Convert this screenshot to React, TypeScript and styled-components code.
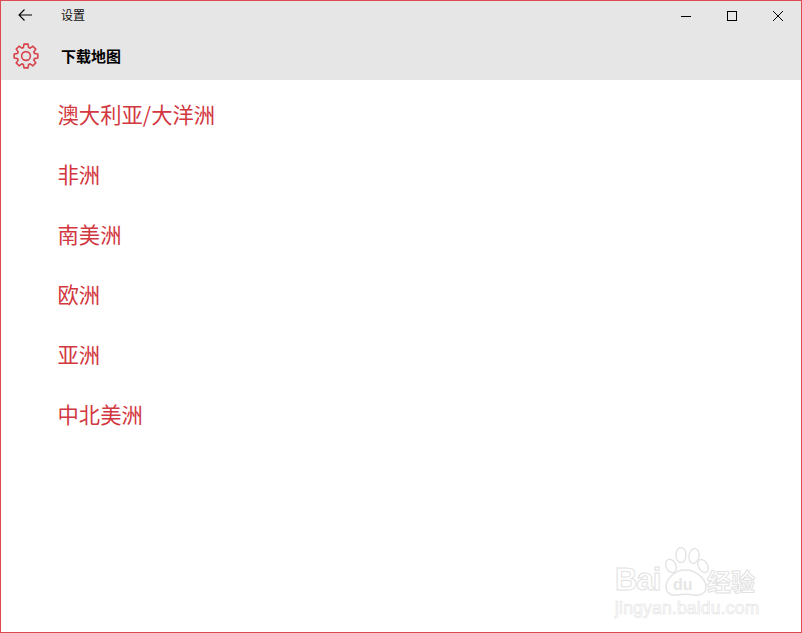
import React from "react";
import styled, { createGlobalStyle } from "styled-components";

const GlobalStyle = createGlobalStyle`
  html, body { margin: 0; padding: 0; background: #fff; }
  body { font-family: "Noto Sans CJK SC", "Liberation Sans", sans-serif; }
`;

const Windowed = styled.div`
  position: relative;
  box-sizing: border-box;
  width: 802px;
  height: 633px;
  border: 1px solid #dd4a52;
  background: #fff;
  overflow: hidden;
`;

const TitleBar = styled.div`
  display: flex;
  align-items: center;
  height: 30px;
  background: #e6e6e6;
`;

const BackButton = styled.div`
  display: flex;
  align-items: center;
  justify-content: center;
  box-sizing: border-box;
  width: 48px;
  height: 30px;
  padding-bottom: 2px;
`;

const TitleText = styled.span`
  margin: 0 0 3px 12px;
  font-size: 12px;
  color: #111;
  flex: 1;
`;

const WinButton = styled.div`
  display: flex;
  align-items: center;
  justify-content: center;
  width: 46px;
  height: 30px;
`;

const Header = styled.div`
  display: flex;
  align-items: center;
  height: 49px;
  background: #e6e6e6;
`;

const GearSlot = styled.div`
  display: flex;
  align-items: center;
  justify-content: center;
  box-sizing: border-box;
  width: 48px;
  padding-left: 1px;
  color: #d8434c;
`;

const PageTitle = styled.span`
  margin-left: 12px;
  font-size: 15px;
  font-weight: 700;
  color: #000;
`;

const RegionList = styled.ul`
  list-style: none;
  margin: 0;
  padding: 3px 0 0 56.5px;
`;

const RegionRow = styled.li`
  display: flex;
  align-items: center;
  height: 60px;
  font-size: 21.33px;
  color: #d2383f;
`;

const Watermark = styled.div`
  position: absolute;
  right: 40px;
  bottom: 10px;
  width: 146px;
  height: 76px;
`;

const Paw = styled.svg`
  position: absolute;
  left: 48px;
  top: 0;
`;

const MarkBai = styled.span`
  position: absolute;
  left: 0;
  top: 16px;
  font-family: "Liberation Sans", sans-serif;
  font-size: 31px;
  font-weight: 700;
  line-height: 36px;
  letter-spacing: -1px;
  color: #fff;
  -webkit-text-stroke: 1px #e2e2e2;
`;

const MarkDu = styled.span`
  position: absolute;
  left: 58px;
  top: 30px;
  font-family: "Liberation Sans", sans-serif;
  font-size: 16px;
  font-weight: 700;
  line-height: 18px;
  color: #e6e6e6;
`;

const MarkCn = styled.span`
  position: absolute;
  left: 92px;
  top: 21px;
  font-size: 24px;
  font-weight: 700;
  line-height: 28px;
  color: #fff;
  white-space: nowrap;
  -webkit-text-stroke: 1px #e2e2e2;
`;

const MarkUrl = styled.span`
  position: absolute;
  left: 0;
  top: 52px;
  font-family: "Liberation Sans", sans-serif;
  font-size: 17.5px;
  line-height: 20px;
  letter-spacing: 0.2px;
  color: #fff;
  white-space: nowrap;
  -webkit-text-stroke: 0.7px #e6e6e6;
`;

const regions = ["澳大利亚/大洋洲", "非洲", "南美洲", "欧洲", "亚洲", "中北美洲"];

// eight toothed outline, same shape as the Windows settings gear
function gearPath(cx: number, cy: number, outer: number, root: number) {
  const pts: string[] = [];
  for (let i = 0; i < 8; i++) {
    const a = (i * Math.PI) / 4 - Math.PI / 2;
    const spots: [number, number][] = [
      [root, -0.3],
      [outer, -0.17],
      [outer, 0.17],
      [root, 0.3],
    ];
    spots.forEach(([r, d]) => {
      pts.push(`${(cx + r * Math.cos(a + d)).toFixed(2)} ${(cy + r * Math.sin(a + d)).toFixed(2)}`);
    });
  }
  return `M${pts.join("L")}Z`;
}

export default function App() {
  return (
    <Windowed>
      <GlobalStyle />
      <TitleBar>
        <BackButton>
          <svg width="16" height="16" viewBox="0 0 16 16" fill="none" stroke="#000" strokeWidth="1.1">
            <path d="M2 8h13M7.5 2.5 2 8l5.5 5.5" />
          </svg>
        </BackButton>
        <TitleText>设置</TitleText>
        <WinButton>
          <svg width="12" height="12" viewBox="0 0 12 12" fill="none" stroke="#000">
            <path d="M1 6.5h10" />
          </svg>
        </WinButton>
        <WinButton>
          <svg width="12" height="12" viewBox="0 0 12 12" fill="none" stroke="#000">
            <rect x="1.5" y="1.5" width="9" height="9" />
          </svg>
        </WinButton>
        <WinButton>
          <svg width="12" height="12" viewBox="0 0 12 12" fill="none" stroke="#000">
            <path d="M1 1l10 10M11 1 1 11" />
          </svg>
        </WinButton>
      </TitleBar>
      <Header>
        <GearSlot>
          <svg width="26" height="26" viewBox="0 0 26 26" fill="none" stroke="currentColor" strokeWidth="1.6" strokeLinejoin="round">
            <path d={gearPath(13, 13, 12, 8.8)} />
            <circle cx="13" cy="13" r="4.4" />
          </svg>
        </GearSlot>
        <PageTitle>下载地图</PageTitle>
      </Header>
      <RegionList>
        {regions.map((name) => (
          <RegionRow key={name}>{name}</RegionRow>
        ))}
      </RegionList>
      <Watermark>
        <Paw width="46" height="52" viewBox="0 0 46 52" fill="#fff" stroke="#e4e4e4" strokeWidth="1.4">
          <ellipse cx="8" cy="20" rx="5" ry="7" transform="rotate(-25 8 20)" />
          <ellipse cx="18" cy="9" rx="5" ry="7.5" />
          <ellipse cx="31" cy="10" rx="5" ry="7.5" transform="rotate(10 31 10)" />
          <ellipse cx="40" cy="20" rx="4.5" ry="7" transform="rotate(-30 40 20)" />
          <path d="M3 41c0-8 9-17 19-17s21 8 21 17c0 6-5 9-12 8-6-1-11-1-17 0-6 1-11-2-11-8z" />
        </Paw>
        <MarkBai>Bai</MarkBai>
        <MarkDu>du</MarkDu>
        <MarkCn>经验</MarkCn>
        <MarkUrl>jingyan.baidu.com</MarkUrl>
      </Watermark>
    </Windowed>
  );
}
